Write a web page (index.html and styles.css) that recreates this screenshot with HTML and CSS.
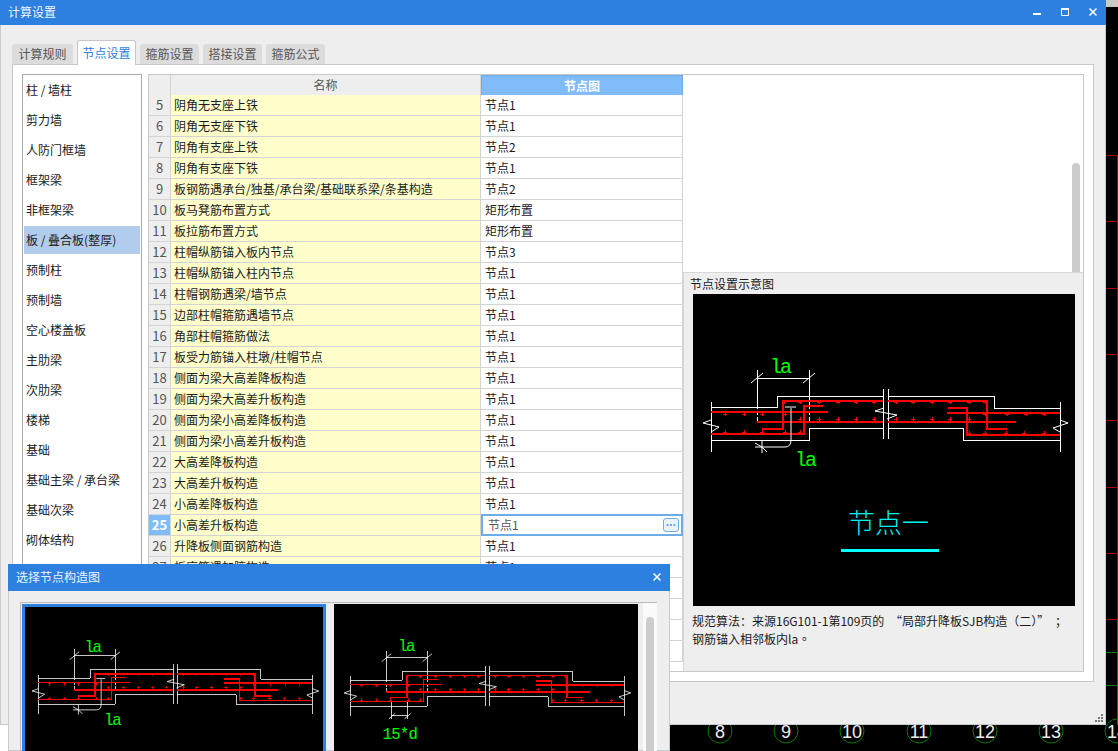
FILE: index.html
```html
<!DOCTYPE html>
<html lang="zh">
<head>
<meta charset="utf-8">
<title>计算设置</title>
<link rel="stylesheet" href="styles.css">
</head>
<body>
<svg class="hidden-defs" aria-hidden="true">
  <defs>
    <g id="slab">
      <path class="w" d="M711 402V452M1060 402V452M711 407H777V396H883M888 396H994V408H1060M711 440H809V428H883M888 428H963V440H1060M883 389V439M888 389V439"/>
      <path class="w" d="M757 370V405M809 370V405M757 378H809"/>
      <path class="wt" d="M751 383L763 373M803 383L815 373"/>
      <path class="wd" d="M757 405V423M809 405V423"/>
      <path class="wt" d="M711 420L703 423L719 427L711 432M1060 420L1068 423L1053 428L1060 432M884 408L875 411L897 415L887 419"/>
      <path class="r" d="M883 401H783V429H762M888 401H987V429H1007M711 412H828M757 422H883M888 422H1016M711 434H804V406H823M948 408H967V435H1060M947 413H1060"/>
      <path class="p" d="M784 402m-2 0h4m-2-2v4M800 402m-2 0h4m-2-2v4M819 402m-2 0h4m-2-2v4M838 402m-2 0h4m-2-2v4M856 402m-2 0h4m-2-2v4M874 402m-2 0h4m-2-2v4M896 402m-2 0h4m-2-2v4M913 402m-2 0h4m-2-2v4M932 402m-2 0h4m-2-2v4M950 402m-2 0h4m-2-2v4M969 402m-2 0h4m-2-2v4M985 402m-2 0h4m-2-2v4M725 414m-2 0h4m-2-2v4M744 414m-2 0h4m-2-2v4M762 414m-2 0h4m-2-2v4M785 414m-2 0h4m-2-2v4M985 414m-2 0h4m-2-2v4M1007 414m-2 0h4m-2-2v4M1026 414m-2 0h4m-2-2v4M1044 414m-2 0h4m-2-2v4M800 419m-2 0h4m-2-2v4M819 419m-2 0h4m-2-2v4M838 419m-2 0h4m-2-2v4M856 419m-2 0h4m-2-2v4M874 419m-2 0h4m-2-2v4M896 419m-2 0h4m-2-2v4M913 419m-2 0h4m-2-2v4M932 419m-2 0h4m-2-2v4M950 419m-2 0h4m-2-2v4M969 419m-2 0h4m-2-2v4M725 432m-2 0h4m-2-2v4M744 432m-2 0h4m-2-2v4M762 432m-2 0h4m-2-2v4M785 432m-2 0h4m-2-2v4M800 432m-2 0h4m-2-2v4M969 433m-2 0h4m-2-2v4M985 433m-2 0h4m-2-2v4M1006 433m-2 0h4m-2-2v4M1024 433m-2 0h4m-2-2v4M1044 433m-2 0h4m-2-2v4"/>
    </g>
    <g id="dim-la">
      <path class="wt" d="M762 440V453M755 447H785Q791 447 791 440V408M785 407H796M755 443L762 447L767 452"/>
      <text class="g" x="770" y="373">la</text>
      <text class="g" x="795" y="466">la</text>
    </g>
    <g id="dim-d">
      <path class="w" d="M764 434V456M784 434V456M764 452H784"/>
      <path class="wt" d="M760 456L768 449M780 456L788 449"/>
      <text class="g" x="772" y="369">la</text>
      <text class="g g-lg" x="752" y="481">15*d</text>
    </g>
  </defs>
</svg>

<svg class="desktop" viewBox="0 0 1118 751" aria-hidden="true">
  <rect class="d-grey" x="1106" y="0" width="12" height="7"/>
  <rect class="d-white" x="0" y="725" width="10" height="26"/>
  <path class="d-red" d="M1106 155.500H1118M1106 221.500H1118M1106 288.500H1118M1106 354.500H1118M1106 420.500H1118M1106 487.500H1118M1106 553.500H1118M1106 619.500H1118M1117.500 155V620"/>
  <path class="d-green" d="M1106 652.500H1118M1106 685.500H1118M1117.500 620V725"/>
  <g class="axis">
    <circle cx="720" cy="731" r="12"/><text x="720" y="738">8</text>
    <circle cx="786" cy="731" r="12"/><text x="786" y="738">9</text>
    <circle cx="852" cy="731" r="12"/><text x="852" y="738">10</text>
    <circle cx="919" cy="731" r="12"/><text x="919" y="738">11</text>
    <circle cx="985" cy="731" r="12"/><text x="985" y="738">12</text>
    <circle cx="1051" cy="731" r="12"/><text x="1051" y="738">13</text>
    <circle cx="1117" cy="731" r="12"/><text x="1117" y="738">14</text>
  </g>
</svg>

<section class="window">
  <header class="titlebar">
    <span>计算设置</span>
    <span class="win-btns">
      <svg width="8" height="8" viewBox="0 0 8 8"><rect y="5" width="8" height="2" fill="#fff"/></svg>
      <svg width="8" height="8" viewBox="0 0 8 8"><path d="M.5 1.500H7.500V7.500H.5Z" fill="none" stroke="#fff"/><rect y="0" width="8" height="2" fill="#fff"/></svg>
      <svg width="8" height="8" viewBox="0 0 8 8"><path d="M.5.5L7.500 7.500M7.500.5L.5 7.500" stroke="#fff" stroke-width="1.500"/></svg>
    </span>
  </header>
  <nav class="tabs">
    <span class="tab tab-first">计算规则</span>
    <span class="tab tab-on">节点设置</span>
    <span class="tab">箍筋设置</span>
    <span class="tab">搭接设置</span>
    <span class="tab">箍筋公式</span>
  </nav>
  <div class="tabpanel">
    <ul class="list">
      <li>柱 / 墙柱</li>
      <li>剪力墙</li>
      <li>人防门框墙</li>
      <li>框架梁</li>
      <li>非框架梁</li>
      <li class="on">板 / 叠合板(整厚)</li>
      <li>预制柱</li>
      <li>预制墙</li>
      <li>空心楼盖板</li>
      <li>主肋梁</li>
      <li>次肋梁</li>
      <li>楼梯</li>
      <li>基础</li>
      <li>基础主梁 / 承台梁</li>
      <li>基础次梁</li>
      <li>砌体结构</li>
    </ul>
    <div class="gridbox">
      <div class="row head"><div class="num"></div><div class="hname">名称</div><div class="hnode">节点图</div></div>
      <div class="row"><div class="num">5</div><div class="name">阴角无支座上铁</div><div class="node">节点1</div></div>
      <div class="row"><div class="num">6</div><div class="name">阴角无支座下铁</div><div class="node">节点1</div></div>
      <div class="row"><div class="num">7</div><div class="name">阴角有支座上铁</div><div class="node">节点2</div></div>
      <div class="row"><div class="num">8</div><div class="name">阴角有支座下铁</div><div class="node">节点1</div></div>
      <div class="row"><div class="num">9</div><div class="name">板钢筋遇承台/独基/承台梁/基础联系梁/条基构造</div><div class="node">节点2</div></div>
      <div class="row"><div class="num">10</div><div class="name">板马凳筋布置方式</div><div class="node">矩形布置</div></div>
      <div class="row"><div class="num">11</div><div class="name">板拉筋布置方式</div><div class="node">矩形布置</div></div>
      <div class="row"><div class="num">12</div><div class="name">柱帽纵筋锚入板内节点</div><div class="node">节点3</div></div>
      <div class="row"><div class="num">13</div><div class="name">柱帽纵筋锚入柱内节点</div><div class="node">节点1</div></div>
      <div class="row"><div class="num">14</div><div class="name">柱帽钢筋遇梁/墙节点</div><div class="node">节点1</div></div>
      <div class="row"><div class="num">15</div><div class="name">边部柱帽箍筋遇墙节点</div><div class="node">节点1</div></div>
      <div class="row"><div class="num">16</div><div class="name">角部柱帽箍筋做法</div><div class="node">节点1</div></div>
      <div class="row"><div class="num">17</div><div class="name">板受力筋锚入柱墩/柱帽节点</div><div class="node">节点1</div></div>
      <div class="row"><div class="num">18</div><div class="name">侧面为梁大高差降板构造</div><div class="node">节点1</div></div>
      <div class="row"><div class="num">19</div><div class="name">侧面为梁大高差升板构造</div><div class="node">节点1</div></div>
      <div class="row"><div class="num">20</div><div class="name">侧面为梁小高差降板构造</div><div class="node">节点1</div></div>
      <div class="row"><div class="num">21</div><div class="name">侧面为梁小高差升板构造</div><div class="node">节点1</div></div>
      <div class="row"><div class="num">22</div><div class="name">大高差降板构造</div><div class="node">节点1</div></div>
      <div class="row"><div class="num">23</div><div class="name">大高差升板构造</div><div class="node">节点1</div></div>
      <div class="row"><div class="num">24</div><div class="name">小高差降板构造</div><div class="node">节点1</div></div>
      <div class="row sel"><div class="num">25</div><div class="name">小高差升板构造</div>
        <div class="node edit"><span>节点1</span>
          <svg class="more" width="16" height="14" viewBox="0 0 16 14"><rect x=".5" y=".5" width="15" height="13" rx="2.500" fill="#eaf2fb" stroke="#6cade8"/><path d="M3.500 6h2v2h-2zM7 6h2v2h-2zM10.500 6h2v2h-2z" fill="#6cade8"/></svg>
        </div>
      </div>
      <div class="row"><div class="num">26</div><div class="name">升降板侧面钢筋构造</div><div class="node">节点1</div></div>
      <div class="row"><div class="num">27</div><div class="name">板底筋遇加腋构造</div><div class="node">节点1</div></div>
      <div class="row"><div class="num"></div><div class="name"></div><div class="node"></div></div>
      <div class="row"><div class="num"></div><div class="name"></div><div class="node"></div></div>
      <div class="row"><div class="num"></div><div class="name"></div><div class="node"></div></div>
      <div class="row"><div class="num"></div><div class="name"></div><div class="node"></div></div>
      <div class="vthumb"></div>
      <aside class="preview">
        <div class="preview-title">节点设置示意图</div>
        <svg class="cad cad-main" viewBox="693 294 382 312">
          <use href="#slab"/>
          <use href="#dim-la"/>
          <text class="big" x="848" y="533">节点一</text>
          <rect class="big-line" x="841" y="549" width="98" height="3"/>
        </svg>
        <p class="note">规范算法：来源16G101-1第109页的 “局部升降板SJB构造（二）” ；<br>钢筋锚入相邻板内la。</p>
      </aside>
    </div>
  </div>
  <svg class="grip" width="8" height="8" viewBox="0 0 8 8"><path d="M6 0h2v2H6zM3 3h2v2H3zM6 3h2v2H6zM0 6h2v2H0zM3 6h2v2H3zM6 6h2v2H6z" fill="#777"/></svg>
</section>

<section class="dialog">
  <header class="titlebar dlg-title">
    <span>选择节点构造图</span>
    <svg width="8" height="8" viewBox="0 0 8 8"><path d="M.5.5L7.500 7.500M7.500.5L.5 7.500" stroke="#fff" stroke-width="1.500"/></svg>
  </header>
  <div class="picker">
    <div class="thumb thumb-on">
      <svg class="cad cad-thumb" viewBox="694 316 379.500 190.400" preserveAspectRatio="xMinYMin meet">
        <use href="#slab"/>
        <use href="#dim-la"/>
      </svg>
    </div>
    <div class="thumb">
      <svg class="cad cad-thumb" viewBox="694 313.500 379.500 190.400" preserveAspectRatio="xMinYMin meet">
        <use href="#slab"/>
        <use href="#dim-d"/>
      </svg>
    </div>
    <div class="track"><div class="track-thumb"></div></div>
  </div>
</section>
</body>
</html>
```
FILE: styles.css
```css
* { box-sizing: border-box; }
html, body { margin: 0; padding: 0; }
body {
  position: relative;
  width: 1118px;
  height: 751px;
  overflow: hidden;
  background: #000;
  font: 12px/16px "Noto Sans CJK SC", "Noto Sans", sans-serif;
  color: #1a1a1a;
}
.hidden-defs { position: absolute; width: 0; height: 0; }

/* CAD canvas behind the windows */
.desktop { position: absolute; left: 0; top: 0; width: 1118px; height: 751px; }
.d-grey { fill: #c9c9c9; }
.d-white { fill: #fff; }
.d-red { stroke: #a80000; stroke-width: 1; fill: none; }
.d-green { stroke: #0a7a0a; stroke-width: 1; fill: none; }
.axis circle { fill: none; stroke: #0a7a0a; stroke-width: 1; }
.axis text { fill: #eee; font: 18px "Liberation Sans", sans-serif; text-anchor: middle; }

/* main window */
.window {
  position: absolute;
  left: 0;
  top: 0;
  width: 1106px;
  height: 725px;
  background: #eee;
  box-shadow: inset 0 0 0 1px #c6ccd2;
}
.titlebar {
  display: flex;
  align-items: center;
  justify-content: space-between;
  height: 25px;
  padding: 0 9px 1px 8px;
  background: #2d7fe0;
  color: #eef4fc;
}
.win-btns { display: flex; gap: 20px; align-items: center; }
.win-btns svg { display: block; }

.tabs {
  display: flex;
  align-items: flex-end;
  gap: 4px;
  height: 24px;
  margin: 15px 0 0 12px;
  position: relative;
  z-index: 1;
}
.tab {
  width: 59px;
  height: 20px;
  background: #dcdcdc;
  color: #555;
  text-align: center;
  line-height: 19px;
  border-radius: 3px 3px 0 0;
}
.tab-first { width: 61px; }
.tab-on {
  height: 25px;
  margin-bottom: -1px;
  padding-top: 2px;
  background: #fff;
  border: 1px solid #c8c8c8;
  border-bottom: 0;
  color: #2d7fe0;
}
.tabpanel {
  display: flex;
  gap: 6px;
  width: 1082px;
  height: 618px;
  margin-left: 12px;
  padding: 9px;
  background: #fff;
  border: 1px solid #c8c8c8;
}

/* left list */
.list {
  flex: 0 0 120px;
  margin: 0;
  padding: 0;
  list-style: none;
  border: 1px solid #aaa;
  overflow: hidden;
}
.list li {
  height: 30px;
  margin: 0 1px;
  padding-left: 2px;
  line-height: 28px;
  border-top: 1px solid transparent;
  border-bottom: 1px solid transparent;
  background-clip: padding-box;
}
.list .on { background-color: #b2cced; }

/* grid */
.gridbox {
  position: relative;
  flex: 1;
  border: 1px solid #c8c8c8;
  overflow: hidden;
}
.row {
  display: grid;
  grid-template-columns: 22px 310px 202px;
  width: 534px;
  height: 21px;
}
.row > div { border-bottom: 1px solid #d4d4d4; line-height: 20px; white-space: nowrap; }
.num {
  background: #eee;
  border-right: 1px solid #d4d4d4;
  text-align: center;
  color: #555;
  font-size: 13px;
}
.name { padding-left: 3px; background: #ffc; border-right: 1px solid #d4d4d4; }
.node { padding-left: 4px; border-right: 1px solid #d4d4d4; background: #fff; }
.head { height: 20px; }
.head > div { line-height: 19px; }
.hname { text-align: center; background: #eee; color: #555; border-right: 1px solid #d4d4d4; }
.head .hnode {
  text-align: center;
  background: #80bbfa;
  border: 1px solid #6cade8;
  color: #fff;
  font-weight: 700;
}
.sel .num { background: #80bbfa; color: #fff; font-weight: 700; }
.sel .edit {
  display: flex;
  align-items: center;
  justify-content: space-between;
  height: 22px;
  margin-top: -1px;
  padding: 0 2px 0 5px;
  border: 2px solid #6cade8;
  color: #555;
  position: relative;
}
.more { display: block; }

.vthumb {
  position: absolute;
  left: 923px;
  top: 88px;
  width: 8px;
  height: 110px;
  background: #ccc;
  border-radius: 4px 4px 0 0;
}
.preview {
  position: absolute;
  left: 534px;
  top: 197px;
  right: 0;
  bottom: 0;
  padding: 3px 8px 0 9px;
  background: #eee;
  border-left: 1px solid #d8d8d8;
  border-top: 1px solid #d8d8d8;
}
.preview-title { margin-left: -3px; height: 18px; line-height: 16px; }
.cad { display: block; background: #000; }
.cad-main { width: 382px; height: 312px; }
.note {
  margin: 6px 0 0 -1px;
  line-height: 18px;
  white-space: nowrap;
  word-spacing: 3px;
  font-family: "Noto Sans CJK TC", "Noto Sans CJK SC", sans-serif;
}

.w { fill: none; stroke: #fff; stroke-width: 1; shape-rendering: crispEdges; }
.wd { fill: none; stroke: #fff; stroke-width: 1; stroke-dasharray: 4 2; shape-rendering: crispEdges; }
.wt { fill: none; stroke: #fff; stroke-width: 1; }
.r { fill: none; stroke: #f00; stroke-width: 2; shape-rendering: crispEdges; }
.p { fill: none; stroke: #f00; stroke-width: 1; shape-rendering: crispEdges; }
.g { fill: #0f0; font: 20px "Liberation Mono", monospace; letter-spacing: -2px; }
.g-lg { font-size: 20px; letter-spacing: -1px; }
.big { fill: #00eef0; font: 300 27px "Noto Sans CJK SC", sans-serif; }
.big-line { fill: #00ffff; }

.grip { position: absolute; right: 3px; bottom: 3px; }

/* dialog */
.dialog {
  position: absolute;
  left: 8px;
  top: 564px;
  width: 662px;
  height: 187px;
  background: #eee;
  box-shadow: inset 0 0 0 1px #c6ccd2;
  overflow: hidden;
}
.dlg-title { height: 27px; padding: 0 9px 1px 8px; }
.picker {
  position: relative;
  display: flex;
  gap: 8px;
  width: 637px;
  height: 160px;
  margin: 11px 0 0 12px;
  padding: 1px 0 0 1px;
  border-top: 1px solid #bbb;
  border-left: 1px solid #bbb;
}
.thumb {
  flex: 0 0 304px;
  height: 160px;
  border: 3px solid #000;
  background: #000;
  overflow: hidden;
}
.thumb-on { border-color: #2d7fe0; border-bottom: 0; }
.cad-thumb { width: 298px; height: 150px; }
.track {
  position: absolute;
  right: 0;
  top: 0;
  width: 14px;
  height: 160px;
  background: #fbfbfb;
}
.track-thumb {
  width: 8px;
  height: 150px;
  margin: 14px 0 0 3px;
  background: #ccc;
  border-radius: 4px 4px 0 0;
}
```
